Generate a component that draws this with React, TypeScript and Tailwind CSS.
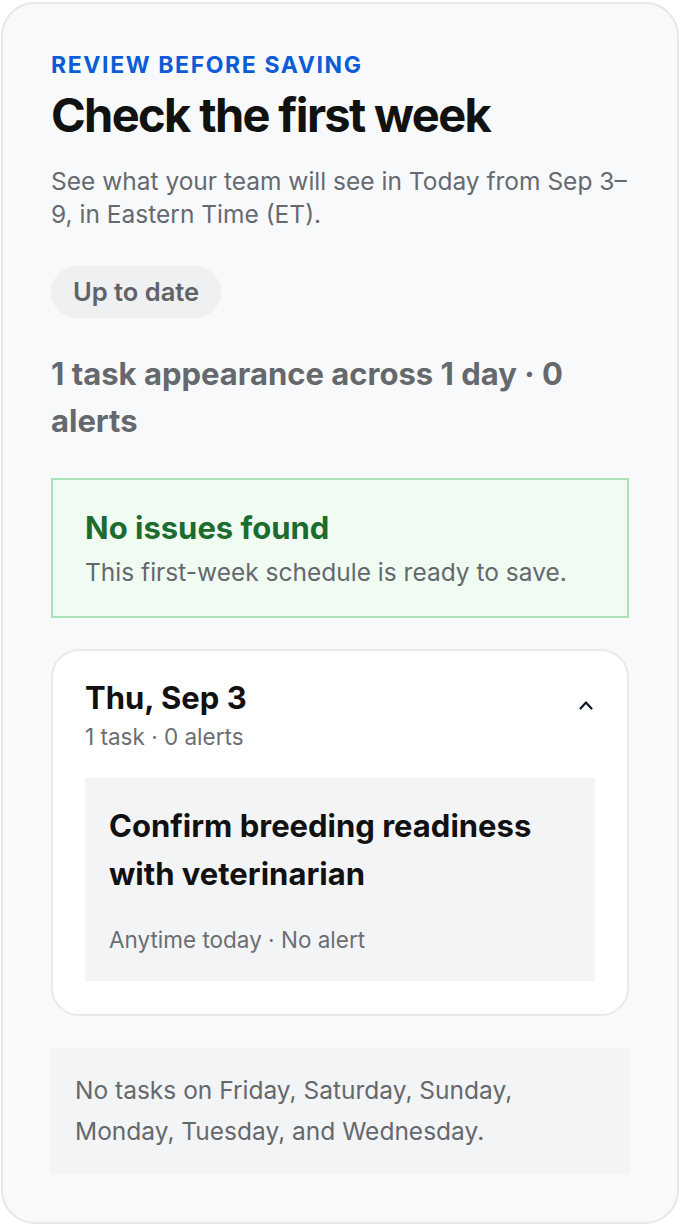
import React from 'react';

const font = { fontFamily: 'Inter, "Noto Sans", sans-serif' };

const ChevronUp = () => (
  <svg width="16" height="12" viewBox="0 0 16 12" fill="none" className="text-gray-900">
    <polyline points="2.5,9.5 8,3.5 13.5,9.5" stroke="currentColor" strokeWidth="2.2" strokeLinecap="round" strokeLinejoin="round" />
  </svg>
);

export default function App() {
  return (
    <div style={font} className="w-[680px] h-[1226px] bg-white p-px pt-[2px]">
      <div className="h-[1222px] rounded-[34px] border-2 border-[#e6e7ea] bg-[#f8f9fb] px-[48px] pt-[46px]">
        <div className="text-[23px] font-bold tracking-[0.07em] text-[#0b5cd6] leading-[30px]">
          REVIEW BEFORE SAVING
        </div>
        <h1 className="mt-[7px] text-[47px] font-bold tracking-[-0.035em] text-[#111] leading-[56px]">
          Check the first week
        </h1>
        <p className="mt-[22px] text-[24.5px] text-[#666a70] leading-[33px]">
          See what your team will see in Today from Sep 3–9, in Eastern Time (ET).
        </p>

        <div className="mt-[35px] inline-flex h-[52px] items-center rounded-full bg-[#eef0f2] px-[22px] text-[25.5px] font-semibold text-[#5f6368]">
          Up to date
        </div>

        <div className="mt-[32px] text-[31px] font-bold text-[#65686c] leading-[47px]">
          1 task appearance across 1 day · 0 alerts
        </div>

        <div className="mt-[34px] border-2 border-[#a9e2b7] bg-[#f0fbf2] px-[32px] pt-[28px] pb-[28px]">
          <div className="text-[31px] font-bold text-[#1c6b2f] leading-[40px]">
            No issues found
          </div>
          <div className="mt-[8px] text-[24.5px] text-[#65686c] leading-[32px]">
            This first-week schedule is ready to save.
          </div>
        </div>

        <div className="mt-[31px] rounded-[28px] border-2 border-[#e8e9ec] bg-white px-[32px] pt-[27px] pb-[33px]">
          <div className="flex items-start justify-between">
            <div>
              <div className="text-[31px] font-bold text-[#111] leading-[40px]">
                Thu, Sep 3
              </div>
              <div className="mt-[4px] text-[22.5px] text-[#6b6e73] leading-[30px]">
                1 task · 0 alerts
              </div>
            </div>
            <div className="pt-[21px] pr-[1px]">
              <ChevronUp />
            </div>
          </div>
          <div className="mt-[26px] bg-[#f3f4f6] px-[24px] pt-[24px] pb-[26px]">
            <div className="text-[31px] font-bold text-[#111] leading-[48px]">
              Confirm breeding readiness with veterinarian
            </div>
            <div className="mt-[27px] text-[22.5px] text-[#6b6e73] leading-[30px]">
              Anytime today · No alert
            </div>
          </div>
        </div>

        <div className="mt-[32px] bg-[#f3f4f6] px-[24px] py-[22px] text-[24.5px] text-[#65686c] leading-[41px]">
          No tasks on Friday, Saturday, Sunday, Monday, Tuesday, and Wednesday.
        </div>
      </div>
    </div>
  );
}
